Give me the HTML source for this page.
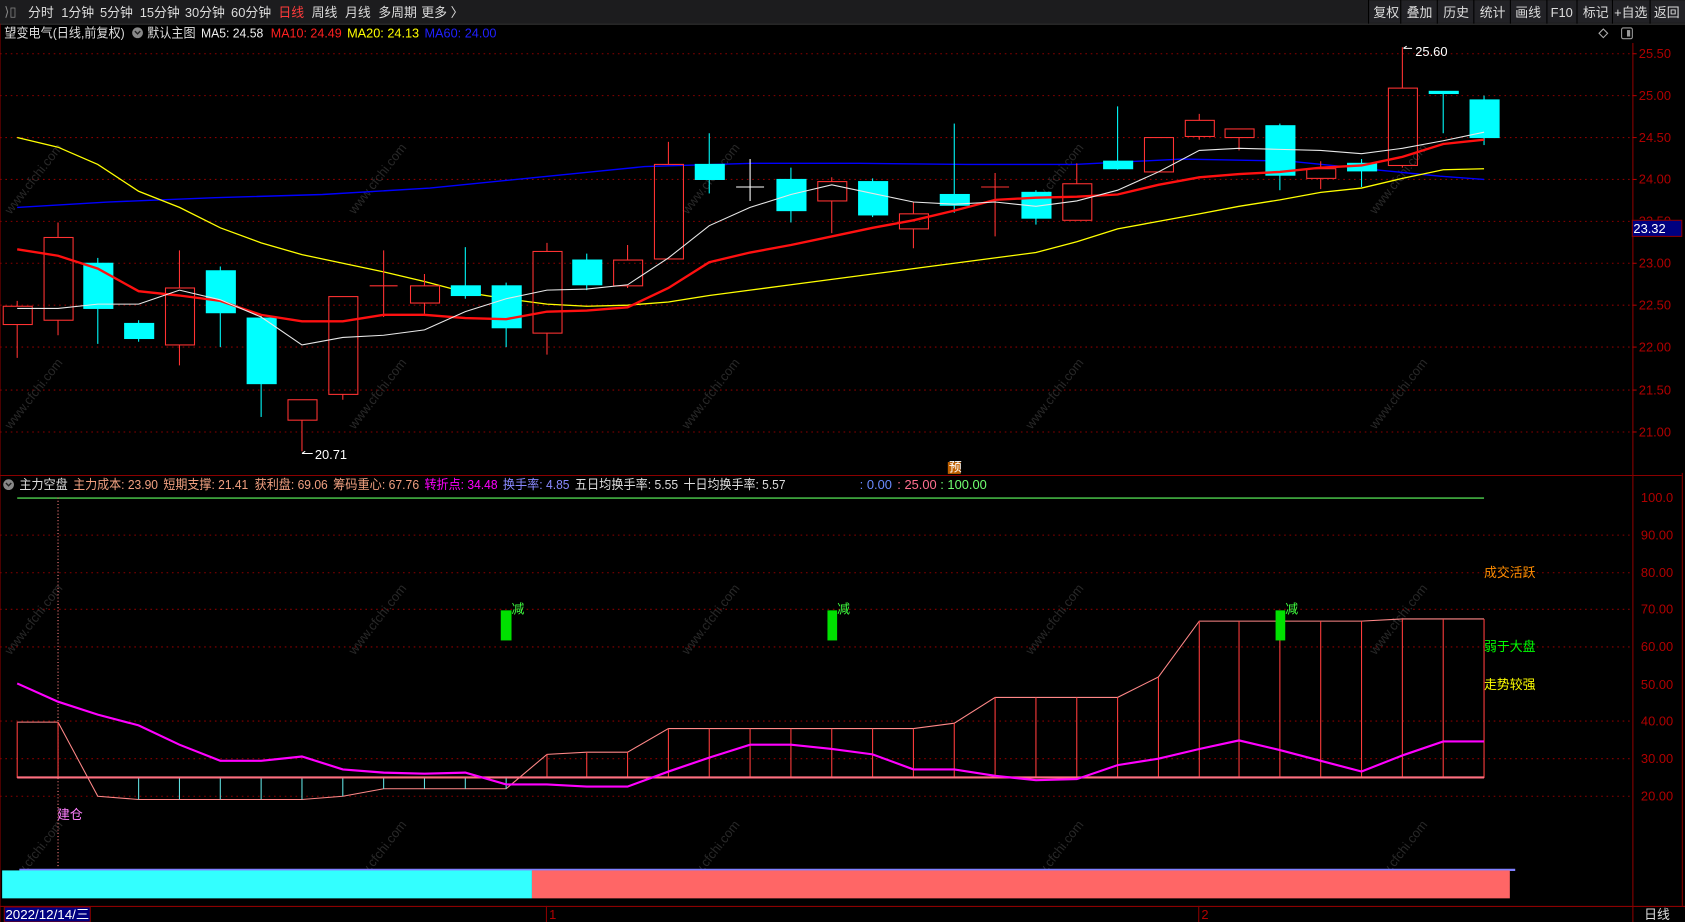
<!DOCTYPE html>
<html><head><meta charset="utf-8"><style>
html,body{margin:0;padding:0;background:#000;overflow:hidden}
svg{display:block}
text{font-family:"Liberation Sans","Noto Sans CJK SC",sans-serif;font-size:12px}
</style></head><body>
<svg width="1685" height="922" viewBox="0 0 1568 858" preserveAspectRatio="none" xmlns="http://www.w3.org/2000/svg">
<rect width="1568" height="858" fill="#000"/>
<!-- toolbar -->
<rect x="0" y="0" width="1568" height="22" fill="#1c1c1e"/>
<line x1="0" y1="22.5" x2="1568" y2="22.5" stroke="#333"/>
<g fill="#ddd"><text x="4" y="15" fill="#888">⟩▯</text>
<text x="26" y="16">分时</text><text x="57" y="16">1分钟</text><text x="93" y="16">5分钟</text><text x="130" y="16">15分钟</text><text x="172" y="16">30分钟</text><text x="215" y="16">60分钟</text><text x="259" y="16" fill="#ff3b3b">日线</text><text x="290" y="16">周线</text><text x="321" y="16">月线</text><text x="352" y="16">多周期</text><text x="392" y="16">更多 〉</text></g>
<g fill="#ddd">
<rect x="1274" y="1" width="294" height="20" fill="#222226"/>
<g stroke="#000"><line x1="1303.5" y1="0" x2="1303.5" y2="22"/><line x1="1337.5" y1="0" x2="1337.5" y2="22"/><line x1="1371.5" y1="0" x2="1371.5" y2="22"/><line x1="1405.5" y1="0" x2="1405.5" y2="22"/><line x1="1439.5" y1="0" x2="1439.5" y2="22"/><line x1="1467.5" y1="0" x2="1467.5" y2="22"/><line x1="1500.5" y1="0" x2="1500.5" y2="22"/><line x1="1535.5" y1="0" x2="1535.5" y2="22"/><line x1="1273.5" y1="0" x2="1273.5" y2="22"/></g>
<text x="1278" y="16">复权</text><text x="1309" y="16">叠加</text><text x="1343" y="16">历史</text><text x="1377" y="16">统计</text><text x="1410" y="16">画线</text><text x="1443" y="16">F10</text><text x="1473" y="16">标记</text><text x="1502" y="16">+自选</text><text x="1539" y="16">返回</text></g>
<!-- info line -->
<text x="4" y="35" fill="#ddd" textLength="112" lengthAdjust="spacingAndGlyphs">望变电气(日线,前复权)</text>
<circle cx="128" cy="30.5" r="5" fill="#888"/><path d="M125.5 29l2.5 2.5 2.5-2.5" stroke="#222" fill="none" stroke-width="1.3"/>
<text x="137" y="35" fill="#ddd" textLength="45" lengthAdjust="spacingAndGlyphs">默认主图</text>
<text x="187" y="35" fill="#eee" textLength="58" lengthAdjust="spacingAndGlyphs">MA5: 24.58</text><text x="252" y="35" fill="#ff2020" textLength="66" lengthAdjust="spacingAndGlyphs">MA10: 24.49</text><text x="323" y="35" fill="#ffff00" textLength="67" lengthAdjust="spacingAndGlyphs">MA20: 24.13</text><text x="395" y="35" fill="#2020ff" textLength="67" lengthAdjust="spacingAndGlyphs">MA60: 24.00</text>
<path d="M1492 27l4 4-4 4-4-4z" fill="none" stroke="#aaa"/><rect x="1509" y="26" width="10" height="10" rx="1.5" fill="none" stroke="#999"/><rect x="1514" y="28" width="3" height="6" fill="#999"/>
<!-- grid main -->
<g stroke="#8a0000" stroke-dasharray="1.5 3.5">
<line x1="0" y1="50" x2="1519" y2="50"/><line x1="0" y1="89" x2="1519" y2="89"/><line x1="0" y1="128" x2="1519" y2="128"/><line x1="0" y1="167" x2="1519" y2="167"/><line x1="0" y1="206" x2="1519" y2="206"/><line x1="0" y1="245" x2="1519" y2="245"/><line x1="0" y1="284" x2="1519" y2="284"/><line x1="0" y1="323" x2="1519" y2="323"/><line x1="0" y1="363" x2="1519" y2="363"/><line x1="0" y1="402" x2="1519" y2="402"/>
<line x1="0" y1="498" x2="1519" y2="498"/><line x1="0" y1="533" x2="1519" y2="533"/><line x1="0" y1="567" x2="1519" y2="567"/><line x1="0" y1="602" x2="1519" y2="602"/><line x1="0" y1="671" x2="1519" y2="671"/><line x1="0" y1="706" x2="1519" y2="706"/><line x1="0" y1="741" x2="1519" y2="741"/>
</g>
<g stroke="#8a0000"><line x1="0" y1="442.5" x2="1519" y2="442.5"/><line x1="1519.5" y1="40" x2="1519.5" y2="858"/><line x1="1565.5" y1="440" x2="1565.5" y2="843"/><line x1="0" y1="843.5" x2="1568" y2="843.5"/><line x1="1519" y1="442.5" x2="1565" y2="442.5"/><line x1="0" y1="22" x2="0" y2="858"/></g>
<!-- axis labels -->
<g fill="#b00000" font-size="12"><text x="1525" y="54">25.50</text><text x="1525" y="93">25.00</text><text x="1525" y="132">24.50</text><text x="1525" y="171">24.00</text><text x="1525" y="210">23.50</text><text x="1525" y="249">23.00</text><text x="1525" y="288">22.50</text><text x="1525" y="327">22.00</text><text x="1525" y="367">21.50</text><text x="1525" y="406">21.00</text>
<text x="1527" y="467">100.0</text><text x="1527" y="502">90.00</text><text x="1527" y="537">80.00</text><text x="1527" y="571">70.00</text><text x="1527" y="606">60.00</text><text x="1527" y="641">50.00</text><text x="1527" y="675">40.00</text><text x="1527" y="710">30.00</text><text x="1527" y="745">20.00</text></g>
<g stroke="#b00000"><line x1="1519" y1="50" x2="1523" y2="50"/><line x1="1519" y1="89" x2="1523" y2="89"/><line x1="1519" y1="128" x2="1523" y2="128"/><line x1="1519" y1="167" x2="1523" y2="167"/><line x1="1519" y1="245" x2="1523" y2="245"/><line x1="1519" y1="284" x2="1523" y2="284"/><line x1="1519" y1="323" x2="1523" y2="323"/><line x1="1519" y1="363" x2="1523" y2="363"/><line x1="1519" y1="402" x2="1523" y2="402"/></g>
<rect x="1519" y="205" width="46" height="15" fill="#000080" stroke="#8a0000"/><text x="1520" y="217" fill="#fff">23.32</text>
<!-- watermarks -->
<g fill="#333" font-size="19" opacity="0.8">
<text transform="translate(10,200) rotate(-52)">www.cfchi.com</text><text transform="translate(330,200) rotate(-52)">www.cfchi.com</text><text transform="translate(640,200) rotate(-52)">www.cfchi.com</text><text transform="translate(960,200) rotate(-52)">www.cfchi.com</text><text transform="translate(1280,200) rotate(-52)">www.cfchi.com</text>
<text transform="translate(10,400) rotate(-52)">www.cfchi.com</text><text transform="translate(330,400) rotate(-52)">www.cfchi.com</text><text transform="translate(640,400) rotate(-52)">www.cfchi.com</text><text transform="translate(960,400) rotate(-52)">www.cfchi.com</text><text transform="translate(1280,400) rotate(-52)">www.cfchi.com</text>
<text transform="translate(10,610) rotate(-52)">www.cfchi.com</text><text transform="translate(330,610) rotate(-52)">www.cfchi.com</text><text transform="translate(640,610) rotate(-52)">www.cfchi.com</text><text transform="translate(960,610) rotate(-52)">www.cfchi.com</text><text transform="translate(1280,610) rotate(-52)">www.cfchi.com</text>
<text transform="translate(10,830) rotate(-52)">www.cfchi.com</text><text transform="translate(330,830) rotate(-52)">www.cfchi.com</text><text transform="translate(640,830) rotate(-52)">www.cfchi.com</text><text transform="translate(960,830) rotate(-52)">www.cfchi.com</text><text transform="translate(1280,830) rotate(-52)">www.cfchi.com</text>
</g>
<!-- MA lines -->
<polyline fill="none" stroke="#0000ff" stroke-width="1.3" points="16,193 100,188 200,184 300,181 400,175 500,165 600,155 700,152 800,152 900,153 1000,153 1100,148 1200,150 1280,158 1340,164 1381,167"/>
<polyline fill="none" stroke="#ffff00" stroke-width="1.2" points="16,128 54,137 91,153 129,178 167,193 205,212 243,226 281,237 319,245 357,253 395,262 433,272 471,278 509,283 546,285 584,284 622,281 660,275 698,270 736,265 774,260 812,255 850,250 888,245 926,240 964,235 1002,225 1040,213 1078,206 1116,199 1153,192 1191,186 1229,179 1267,175 1305,166 1343,158 1381,157"/>
<!-- candles -->
<g stroke="#ff3232" fill="none" stroke-width="1">
<path d="M16 280V285M16 302V333"/><rect x="3" y="285" width="27" height="17"/>
<path d="M54 207V221M54 298V312"/><rect x="41" y="221" width="27" height="77"/>
<path d="M167 233V268M167 321V340"/><rect x="154" y="268" width="27" height="53"/>
<path d="M281 372V372M281 391V420"/><rect x="268" y="372" width="27" height="19"/>
<path d="M319 276V276M319 367V372"/><rect x="306" y="276" width="27" height="91"/>
<path d="M357 233V295M344 266H370"/>
<path d="M395 255V266M395 282V292"/><rect x="382" y="266" width="27" height="16"/>
<path d="M509 226V234M509 310V330"/><rect x="496" y="234" width="27" height="76"/>
<path d="M584 228V242M584 266V268"/><rect x="571" y="242" width="27" height="24"/>
<path d="M622 132V153"/><rect x="609" y="153" width="27" height="88"/>
<path d="M774 165V169M774 187V217"/><rect x="761" y="169" width="27" height="18"/>
<path d="M850 188V199M850 213V231"/><rect x="837" y="199" width="27" height="14"/>
<path d="M926 161V220M913 174H939"/>
<path d="M1002 152V171"/><rect x="989" y="171" width="27" height="34"/>
<rect x="1065" y="128" width="27" height="32"/>
<path d="M1116 106V112M1116 127V130"/><rect x="1103" y="112" width="27" height="15"/>
<path d="M1153 128V140"/><rect x="1140" y="120" width="27" height="8"/>
<path d="M1229 150V157M1229 166V176"/><rect x="1216" y="157" width="27" height="9"/>
<path d="M1305 44V82M1305 154V156"/><rect x="1292" y="82" width="27" height="72"/>
</g>
<g stroke="#00ffff" fill="#00ffff">
<path d="M91 240V320"/><rect x="78" y="245" width="27" height="42"/>
<path d="M129 298V318"/><rect x="116" y="301" width="27" height="14"/>
<path d="M205 248V323"/><rect x="192" y="252" width="27" height="39"/>
<path d="M243 293V388"/><rect x="230" y="296" width="27" height="61"/>
<path d="M433 230V278"/><rect x="420" y="266" width="27" height="9"/>
<path d="M471 263V323"/><rect x="458" y="266" width="27" height="39"/>
<path d="M546 236V270"/><rect x="533" y="242" width="27" height="23"/>
<path d="M660 124V180"/><rect x="647" y="153" width="27" height="14"/>
<path d="M736 156V207"/><rect x="723" y="167" width="27" height="29"/>
<path d="M812 166V202"/><rect x="799" y="169" width="27" height="31"/>
<path d="M888 115V198"/><rect x="875" y="181" width="27" height="10"/>
<path d="M964 177V209"/><rect x="951" y="179" width="27" height="24"/>
<path d="M1040 99V158"/><rect x="1027" y="150" width="27" height="7"/>
<path d="M1191 115V177"/><rect x="1178" y="117" width="27" height="46"/>
<path d="M1267 148V174"/><rect x="1254" y="152" width="27" height="7"/>
<path d="M1343 85V124"/><rect x="1330" y="85" width="27" height="2"/>
<path d="M1381 89V135"/><rect x="1368" y="93" width="27" height="35"/>
</g>
<path d="M698 148V187M685 174H711" stroke="#fff"/>
<polyline fill="none" stroke="#ff1010" stroke-width="2.2" points="16,232 54,238 91,250 129,271 167,275 205,280 243,293 281,299 319,299 357,293 395,293 433,296 471,297 509,290 546,289 584,286 622,268 660,244 698,235 736,228 774,220 812,212 850,205 888,196 926,186 964,184 1002,183 1040,181 1078,172 1116,165 1153,162 1191,160 1229,156 1267,154 1305,146 1343,134 1381,130"/>
<polyline fill="none" stroke="#e8e8e8" stroke-width="1" points="16,287 54,287 91,283 129,283 167,270 205,279 243,295 281,321 319,314 357,312 395,307 433,290 471,278 509,270 546,269 584,265 622,240 660,210 698,193 736,181 774,172 812,180 850,188 888,190 926,188 964,192 1002,187 1040,177 1078,160 1116,140 1153,138 1191,139 1229,140 1267,143 1305,138 1343,131 1381,123"/>
<text x="1317" y="52" fill="#fff">25.60</text><path d="M1306 45l3-2M1306 45h8" stroke="#fff" fill="none"/>
<text x="293" y="427" fill="#fff">20.71</text><path d="M281 422h10M281 422l3-2" stroke="#fff" fill="none"/>
<rect x="882" y="430" width="12" height="11" fill="#c06000"/><text x="883" y="439" fill="#fff" font-size="9">预</text>
<!-- sub header -->
<circle cx="8" cy="451" r="5" fill="#888"/><path d="M5.5 449.5l2.5 2.5 2.5-2.5" stroke="#222" fill="none" stroke-width="1.3"/>
<g font-size="12" lengthAdjust="spacingAndGlyphs"><text x="18" y="455" fill="#ddd" textLength="45" lengthAdjust="spacingAndGlyphs">主力空盘</text><text x="68" y="455" fill="#f0a080" textLength="79" lengthAdjust="spacingAndGlyphs">主力成本: 23.90</text><text x="152" y="455" fill="#f0a080" textLength="79" lengthAdjust="spacingAndGlyphs">短期支撑: 21.41</text><text x="237" y="455" fill="#f0a080" textLength="68" lengthAdjust="spacingAndGlyphs">获利盘: 69.06</text><text x="310" y="455" fill="#f0a080" textLength="80" lengthAdjust="spacingAndGlyphs">筹码重心: 67.76</text><text x="395" y="455" fill="#ff00ff" textLength="68" lengthAdjust="spacingAndGlyphs">转折点: 34.48</text><text x="468" y="455" fill="#8a8aff" textLength="62" lengthAdjust="spacingAndGlyphs">换手率: 4.85</text><text x="535" y="455" fill="#dddddd" textLength="96" lengthAdjust="spacingAndGlyphs">五日均换手率: 5.55</text><text x="636" y="455" fill="#dddddd" textLength="95" lengthAdjust="spacingAndGlyphs">十日均换手率: 5.57</text><text x="800" y="455" fill="#6a8aff">: 0.00</text><text x="835" y="455" fill="#ff7090">: 25.00</text><text x="875" y="455" fill="#70ff70">: 100.00</text></g>
<line x1="16" y1="463.5" x2="1381" y2="463.5" stroke="#60ff60"/>
<line x1="54" y1="463" x2="54" y2="808" stroke="#ff8080" stroke-dasharray="1 2"/>
<text x="53" y="762" fill="#ff80ff">建仓</text>
<!-- step area -->
<polyline fill="none" stroke="#ff8888" stroke-width="1" points="16,672 54,672 91,741 129,744 167,744 205,744 243,744 281,744 319,741 357,734 395,734 433,734 471,734 509,702 546,700 584,700 622,678 660,678 698,678 736,678 774,678 812,678 850,678 888,673 926,649 964,649 1002,649 1040,649 1078,630 1116,578 1153,578 1191,578 1229,578 1267,578 1305,576 1343,576 1381,576"/>
<g stroke="#ff3c3c"><path d="M16 672V724M54 672V724M509 702V724M546 700V724M584 700V724M622 678V724M660 678V724M698 678V724M736 678V724M774 678V724M812 678V724M850 678V724M888 673V724M926 649V724M964 649V724M1002 649V724M1040 649V724M1078 630V724M1116 578V724M1153 578V724M1191 578V724M1229 578V724M1267 578V724M1305 576V724M1343 576V724M1381 576V724"/></g>
<g stroke="#60e0e0"><path d="M129 724V744M167 724V744M205 724V744M243 724V744M281 724V744M319 724V741M357 724V734M395 724V734M433 724V734M471 724V734"/></g>
<line x1="16" y1="723.5" x2="1381" y2="723.5" stroke="#ff7080" stroke-width="2"/>
<polyline fill="none" stroke="#ff00ff" stroke-width="2" points="16,636 54,653 91,665 129,675 167,693 205,708 243,708 281,704 319,716 357,719 395,720 433,719 471,730 509,730 546,732 584,732 622,718 660,705 698,693 736,693 774,697 812,702 850,716 888,716 926,722 964,726 1002,725 1040,712 1078,706 1116,697 1153,689 1191,698 1229,708 1267,718 1305,703 1343,690 1381,690"/>
<g fill="#00e000"><rect x="466" y="568" width="10" height="28"/><rect x="770" y="568" width="9" height="28"/><rect x="1187" y="568" width="9" height="28"/></g>
<g fill="#40ff40" font-size="11"><text x="476" y="571">减</text><text x="779" y="571">减</text><text x="1196" y="571">减</text></g>
<text x="1381" y="537" fill="#ff8c00">成交活跃</text><text x="1381" y="606" fill="#00ff00">弱于大盘</text><text x="1381" y="641" fill="#ffff00">走势较强</text>
<!-- bottom bar -->
<line x1="18" y1="809.5" x2="1410" y2="809.5" stroke="#8080ff" stroke-width="2"/>
<rect x="2" y="810" width="493" height="26" fill="#33ffff"/><rect x="495" y="810" width="910" height="26" fill="#ff6666"/>
<rect x="4" y="844" width="80" height="14" fill="#000080" stroke="#8a0000"/><text x="5" y="855" fill="#fff" textLength="78" lengthAdjust="spacingAndGlyphs">2022/12/14/三</text>
<line x1="508.5" y1="843" x2="508.5" y2="858" stroke="#8a0000"/><text x="511" y="855" fill="#b00000">1</text>
<line x1="1115.5" y1="843" x2="1115.5" y2="858" stroke="#8a0000"/><text x="1118" y="855" fill="#b00000">2</text>
<text x="1530" y="855" fill="#ddd">日线</text>
</svg>
</body></html>
